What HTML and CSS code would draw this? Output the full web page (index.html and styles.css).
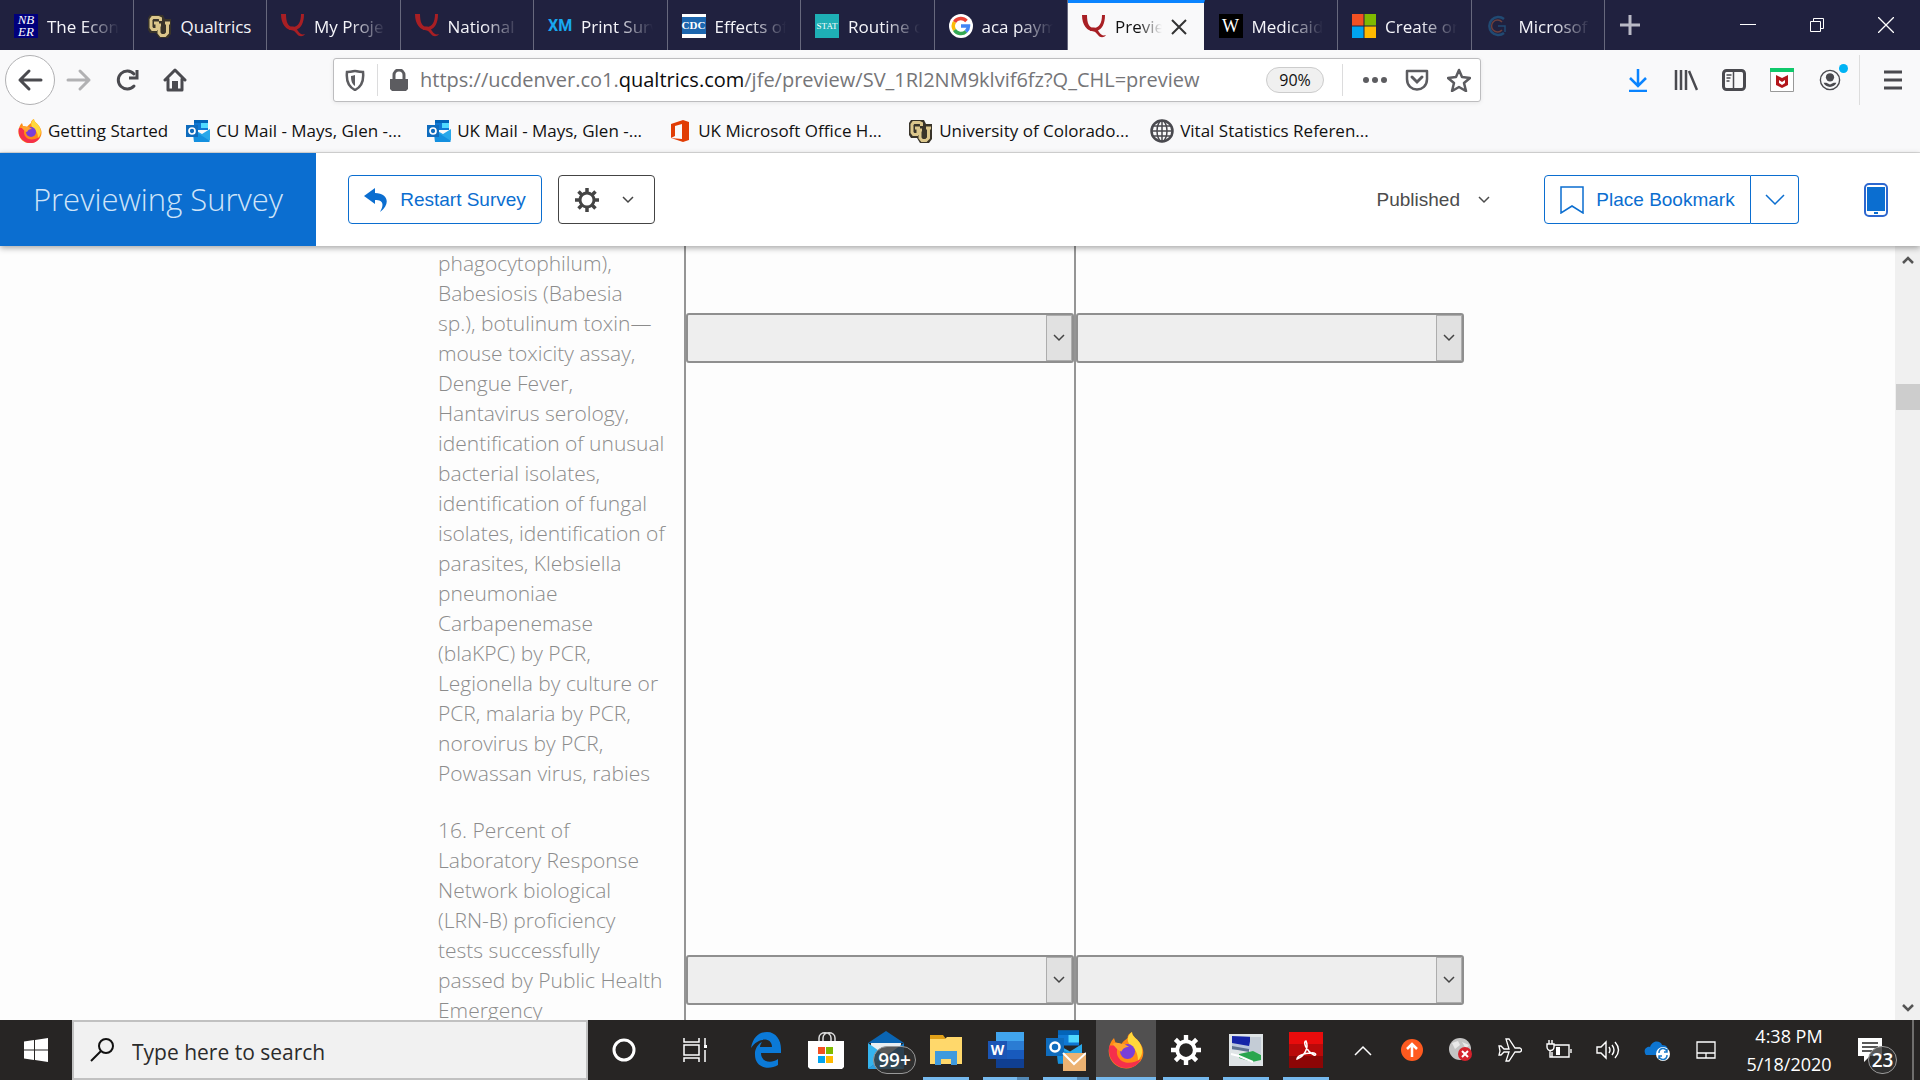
FILE: index.html
```html
<!DOCTYPE html>
<html lang="en">
<head>
    <meta charset="UTF-8">
    <meta name="viewport" content="width=device-width, initial-scale=1.0">
    <title>Preview Survey</title>
    <link rel="stylesheet" href="styles.css">
</head>
<body>
    <!-- Shared icons -->
    <svg class="sprite" aria-hidden="true">
        <symbol id="q-logo" viewBox="0 0 24 24">
            <path d="M0 0h5c0 8 2 13 7 13 5 0 8-5 8-13h3c0 9-3 14-8 16-8 2-15-4-15-16z" fill="#a81f24"/>
            <path d="M8 14c4-3 7-1 9 3 2 3 4 4 7 3-2 3-6 3-8 0-3-4-5-5-8-4z" fill="#a81f24"/>
        </symbol>
        <symbol id="cu-logo" viewBox="0 0 24 24">
            <path d="M2 1h13l2 4h6v15l-3 4h-9l-3-5H2l-2-3V4z" fill="#39342a"/>
            <path d="M12.500 7V4.500l-2-1h-6l-1.500 2v8l1.500 2H9M6 9h5M11 11v8l2 2.500h4l2.500-2.500V9M9 16v-5h4M17 9h5" fill="none" stroke="#dcc78c" stroke-width="3"/>
        </symbol>
        <symbol id="outlook" viewBox="0 0 24 24">
            <path d="M8 1h14v10H8z" fill="#0f78d4"/>
            <path d="M8 1h14v3H8z" fill="#0364b8"/>
            <path d="M15 4h7v5h-7z" fill="#50d9ff"/>
            <path d="M7 10l9 5 8-5v11l-2 2H8z" fill="#28a8ea"/>
            <path d="M7 11l17 11-1 1H8z" fill="#1490df"/>
            <path d="M0 6h12v12H0z" fill="#0f6cbd"/>
            <circle cx="6" cy="12" r="3" fill="none" stroke="#fff" stroke-width="1.700"/>
        </symbol>
        <symbol id="chevron" viewBox="0 0 12 8">
            <path d="M1 1l5 5 5-5" fill="none" stroke="currentColor" stroke-width="1.500"/>
        </symbol>
        <symbol id="gear" viewBox="0 0 24 24">
            <circle cx="12" cy="12" r="7" fill="none" stroke="currentColor" stroke-width="3"/>
            <path d="M12 0v5M12 19v5M0 12h5M19 12h5M3.500 3.500L7 7M17 17l3.500 3.500M3.500 20.500L7 17M17 7l3.500-3.500" stroke="currentColor" stroke-width="3.500"/>
        </symbol>
        <symbol id="firefox" viewBox="0 0 24 24">
            <path d="M16 0c0 3 3 4 5 7 4 5 3 11-1 14-5 5-13 4-17-1C-1 15 0 8 4 4l1 3 4 1c1-2 3-3 4-4 0-2 1-3 3-4z" fill="#ff8a16"/>
            <path d="M16 0c0 3 3 4 5 7 3 5 2 9-1 12 0-5-2-8-5-10-3-3-2-7 1-9z" fill="#ffd83b"/>
            <path d="M1 9c-2 8 4 15 11 15 5 0 8-2 10-6-5 3-12 4-15-1C5 14 6 10 8 9z" fill="#f5304b"/>
            <circle cx="13" cy="13" r="5" fill="#7a3fd8"/>
            <path d="M3 8c3-2 5 0 8 0l3 2c-3 0-4 1-5 3-2 0-4-3-6-5z" fill="#ffa32e"/>
        </symbol>
    </svg>

    <header class="browser">
        <div class="tab-bar">
            <nav class="tabs" aria-label="Open tabs">
                <a class="tab" href="#">
                    <span class="favicon nber">NB<br>ER</span>
                    <span class="tab-title fade">The Econ</span>
                </a>
                <a class="tab" href="#">
                    <svg class="favicon"><use href="#cu-logo"/></svg>
                    <span class="tab-title">Qualtrics</span>
                </a>
                <a class="tab" href="#">
                    <svg class="favicon"><use href="#q-logo"/></svg>
                    <span class="tab-title fade">My Proje</span>
                </a>
                <a class="tab" href="#">
                    <svg class="favicon"><use href="#q-logo"/></svg>
                    <span class="tab-title fade">National</span>
                </a>
                <a class="tab" href="#">
                    <span class="favicon xm">XM</span>
                    <span class="tab-title fade">Print Surv</span>
                </a>
                <a class="tab" href="#">
                    <span class="favicon cdc">CDC</span>
                    <span class="tab-title fade">Effects of</span>
                </a>
                <a class="tab" href="#">
                    <span class="favicon stat">STAT</span>
                    <span class="tab-title fade">Routine c</span>
                </a>
                <a class="tab" href="#">
                    <svg class="favicon" viewBox="0 0 24 24"><circle cx="12" cy="12" r="12" fill="#fff"/><g fill="none" stroke-width="3.500"><path d="M5.500 8A7.500 7.500 0 0 1 17.500 7" stroke="#ea4335"/><path d="M5.500 16a7.500 7.500 0 0 1 0-8" stroke="#fbbc05"/><path d="M17 17.500A7.500 7.500 0 0 1 5.500 16" stroke="#34a853"/><path d="M12 12h7.500a7.500 7.500 0 0 1-2.500 5.500" stroke="#4285f4"/></g></svg>
                    <span class="tab-title fade">aca paym</span>
                </a>
                <a class="tab active" href="#" aria-current="page">
                    <svg class="favicon"><use href="#q-logo"/></svg>
                    <span class="tab-title fade">Previe</span>
                    <svg class="tab-close" viewBox="0 0 16 16"><path d="M1 1l14 14M15 1L1 15" stroke="#333" stroke-width="2"/></svg>
                </a>
                <a class="tab" href="#">
                    <span class="favicon wiki">W</span>
                    <span class="tab-title fade">Medicaid</span>
                </a>
                <a class="tab" href="#">
                    <svg class="favicon" viewBox="0 0 24 24"><path d="M0 0h11.500v11.500H0z" fill="#f25022"/><path d="M12.500 0H24v11.500H12.500z" fill="#7fba00"/><path d="M0 12.500h11.500V24H0z" fill="#00a4ef"/><path d="M12.500 12.500H24V24H12.500z" fill="#ffb900"/></svg>
                    <span class="tab-title fade">Create on</span>
                </a>
                <a class="tab" href="#">
                    <svg class="favicon" viewBox="0 0 24 24"><g fill="none"><path d="M18 5a9 9 0 1 0 0 14" stroke="#214a73" stroke-width="2.500"/><path d="M16 8a6 6 0 1 0 0 8" stroke="#6d3f3c" stroke-width="1.500"/><path d="M12 12h7v6" stroke="#214a73" stroke-width="1.500"/></g></svg>
                    <span class="tab-title fade">Microsof</span>
                </a>
            </nav>
            <button class="new-tab" aria-label="New tab"><svg width="22" height="22" viewBox="0 0 22 22"><path d="M11 1v20M1 11h20" stroke="#b9bac6" stroke-width="3"/></svg></button>
            <div class="window-controls">
                <button aria-label="Minimize"><svg width="16" height="16" viewBox="0 0 16 16"><path d="M0 7.500h16" stroke="#fff"/></svg></button>
                <button aria-label="Restore"><svg width="16" height="16" viewBox="0 0 16 16"><path d="M1.500 4.500h10v10h-10zM4.500 4V1.500h10v10H12" fill="none" stroke="#fff"/></svg></button>
                <button aria-label="Close"><svg width="16" height="16" viewBox="0 0 16 16"><path d="M0 0l16 16M16 0L0 16" stroke="#fff" stroke-width="1.300"/></svg></button>
            </div>
        </div>

        <div class="nav-bar">
            <div class="nav-buttons">
                <button class="back" aria-label="Back"><svg width="26" height="24" viewBox="0 0 26 24"><path d="M24 12H3M12 3l-9 9 9 9" fill="none" stroke="#4a4a4f" stroke-width="3" stroke-linecap="round" stroke-linejoin="round"/></svg></button>
                <button aria-label="Forward"><svg width="26" height="24" viewBox="0 0 26 24"><path d="M2 12h21M14 3l9 9-9 9" fill="none" stroke="#b1b1b3" stroke-width="3" stroke-linecap="round" stroke-linejoin="round"/></svg></button>
                <button aria-label="Reload"><svg width="24" height="24" viewBox="0 0 24 24"><path d="M19 18a9 9 0 1 1 0-12" fill="none" stroke="#4a4a4f" stroke-width="3" stroke-linecap="round"/><path d="M22 2v8h-8" fill="none" stroke="#4a4a4f" stroke-width="3"/></svg></button>
                <button aria-label="Home"><svg width="24" height="24" viewBox="0 0 24 24"><path d="M2 12L12 2l10 10M5 11v11h14V11" fill="none" stroke="#4a4a4f" stroke-width="3" stroke-linecap="round" stroke-linejoin="round"/><path d="M9 13h6v8H9z" fill="#4a4a4f"/></svg></button>
            </div>
            <div class="url-bar">
                <svg width="20" height="22" viewBox="0 0 20 22"><path d="M2 3c6 0 6-1 8-1s2 1 8 1c1 9-2 15-8 18C4 18 1 12 2 3z" fill="none" stroke="#5c5c60" stroke-width="2.500"/><path d="M10 6c-1 0-2 1-4 1 0 5 1 8 4 10z" fill="#5c5c60"/></svg>
                <span class="url-line"></span>
                <svg width="18" height="22" viewBox="0 0 18 22"><path d="M0 10h18v10l-2 2H2l-2-2z" fill="#5c5c60"/><path d="M4 11V6a5 5 0 0 1 10 0v5" fill="none" stroke="#5c5c60" stroke-width="3"/></svg>
                <div class="url" role="textbox" aria-label="Address">https://ucdenver.co1.<b>qualtrics.com</b>/jfe/preview/SV_1Rl2NM9klvif6fz?Q_CHL=preview</div>
                <button class="zoom-level">90%</button>
                <span class="url-line"></span>
                <div class="page-actions">
                    <button aria-label="Page actions"><svg width="24" height="24" viewBox="0 0 24 24"><g fill="#5c5c60"><circle cx="3" cy="12" r="3"/><circle cx="12" cy="12" r="3"/><circle cx="21" cy="12" r="3"/></g></svg></button>
                    <button aria-label="Save to Pocket"><svg width="24" height="24" viewBox="0 0 24 24"><path d="M2 3h20v8c0 14-20 14-20 0z" fill="none" stroke="#5c5c60" stroke-width="2.500" stroke-linejoin="round"/><path d="M7 9l5 5 5-5" fill="none" stroke="#5c5c60" stroke-width="3" stroke-linecap="round"/></svg></button>
                    <button aria-label="Bookmark this page"><svg width="24" height="24" viewBox="0 0 24 24"><path d="M12 2l3 7 8 1-6 5 2 8-7-4-7 4 2-8-6-5 8-1z" fill="none" stroke="#5c5c60" stroke-width="2.500" stroke-linejoin="round"/></svg></button>
                </div>
            </div>
            <div class="toolbar">
                <button aria-label="Downloads"><svg width="24" height="24" viewBox="0 0 24 24"><path d="M12 1v17M4 10l8 8 8-8M3 23h18" fill="none" stroke="#0a84ff" stroke-width="2.500"/></svg></button>
                <button aria-label="Library"><svg width="24" height="24" viewBox="0 0 24 24"><path d="M2 2v20M7 2v20M12 2v20M15 3l8 19" stroke="#4a4a4f" stroke-width="2.500"/></svg></button>
                <button aria-label="Sidebars"><svg width="24" height="24" viewBox="0 0 24 24"><rect x="1.500" y="2.500" width="21" height="19" rx="3" fill="none" stroke="#4a4a4f" stroke-width="3"/><path d="M11.500 3v18M4.500 7h5M4.500 10h4M4.500 13h3" stroke="#4a4a4f" stroke-width="1.500"/></svg></button>
                <button aria-label="McAfee"><svg width="24" height="24" viewBox="0 0 24 24"><path d="M.5.500h23v23H.5z" fill="#fff" stroke="#999"/><path d="M0 0h24v4H0z" fill="#10c96b"/><path d="M6 7l6 3 6-3v10l-6 3-6-3z" fill="#b3161b"/><path d="M9 12l3 2 3-2v3l-3 2-3-2z" fill="#fff"/></svg></button>
                <button class="account" aria-label="Account"><svg width="22" height="22" viewBox="0 0 24 24"><circle cx="12" cy="12" r="10.500" fill="none" stroke="#4a4a4f" stroke-width="1.500"/><circle cx="12" cy="9" r="4.500" fill="#4a4a4f"/><path d="M5 15h3l4 2 4-2h3c-2 6-12 6-14 0z" fill="#4a4a4f"/></svg></button>
                <button class="menu" aria-label="Open menu"><svg width="18" height="20" viewBox="0 0 18 20"><path d="M0 2h18M0 10h18M0 18h18" stroke="#4a4a4f" stroke-width="3"/></svg></button>
            </div>
        </div>

        <nav class="bookmarks" aria-label="Bookmarks">
            <a class="short" href="#"><svg class="favicon"><use href="#firefox"/></svg>Getting Started</a>
            <a href="#"><svg class="favicon"><use href="#outlook"/></svg>CU Mail - Mays, Glen -...</a>
            <a href="#"><svg class="favicon"><use href="#outlook"/></svg>UK Mail - Mays, Glen -...</a>
            <a href="#"><svg class="favicon" viewBox="0 0 24 24"><path d="M3 5l12-4 6 2v18l-6 2-12-4 11 1V5L7 7v10l-4 2z" fill="#e13d05"/></svg>UK Microsoft Office H...</a>
            <a href="#"><svg class="favicon"><use href="#cu-logo"/></svg>University of Colorado...</a>
            <a href="#"><svg class="favicon" viewBox="0 0 24 24"><g fill="none" stroke="#4a4a4f" stroke-width="1.500"><circle cx="12" cy="12" r="10.500" stroke-width="2.500"/><ellipse cx="12" cy="12" rx="5" ry="10.500"/><path d="M12 1v22M1 12h22M3 7h18M3 17h18"/></g></svg>Vital Statistics Referen...</a>
        </nav>
    </header>

    <section class="preview-bar">
        <h1>Previewing Survey</h1>
        <button class="btn restart"><svg width="24" height="24" viewBox="0 0 24 24"><path d="M0 8l11-8v5c13 0 16 11 5 19 5-9 2-12-5-12v4z" fill="#0b6ed0"/></svg>Restart Survey</button>
        <button class="btn tools" aria-label="Tools"><svg width="24" height="24"><use href="#gear"/></svg><svg width="12" height="8"><use href="#chevron"/></svg></button>
        <button class="published">Published<svg width="12" height="8"><use href="#chevron"/></svg></button>
        <div class="bookmark-group">
            <button class="btn"><svg width="24" height="28" viewBox="0 0 24 28"><path d="M1 1h22v26l-11-7-11 7z" fill="none" stroke="#0b6ed0" stroke-width="1.500"/></svg>Place Bookmark</button>
            <button class="btn more" aria-label="More bookmark options"><svg width="20" height="12" viewBox="0 0 20 12"><path d="M1 1l9 9 9-9" fill="none" stroke="#0b6ed0" stroke-width="1.500"/></svg></button>
        </div>
        <button class="device" aria-label="Mobile view"><svg width="24" height="34" viewBox="0 0 24 34"><rect x="1" y="1" width="22" height="32" rx="4" fill="#fff" stroke="#2d67cf" stroke-width="2"/><path d="M3 4h18v24H3z" fill="#0b6ed0"/><path d="M10 30h4" stroke="#0b6ed0" stroke-width="2"/></svg></button>
    </section>

    <main class="survey">
        <div class="survey-page">
            <table class="matrix">
                <tbody>
                    <tr class="row-15">
                        <th scope="row" id="item15">phagocytophilum),<br>Babesiosis (Babesia<br>sp.), botulinum toxin—<br>mouse toxicity assay,<br>Dengue Fever,<br>Hantavirus serology,<br>identification of unusual<br>bacterial isolates,<br>identification of fungal<br>isolates, identification of<br>parasites, Klebsiella<br>pneumoniae<br>Carbapenemase<br>(blaKPC) by PCR,<br>Legionella by culture or<br>PCR, malaria by PCR,<br>norovirus by PCR,<br>Powassan virus, rabies</th>
                        <td><div class="dropdown"><select aria-labelledby="item15"><option></option></select><span class="arrow"><svg width="12" height="8"><use href="#chevron"/></svg></span></div></td>
                        <td><div class="dropdown"><select aria-labelledby="item15"><option></option></select><span class="arrow"><svg width="12" height="8"><use href="#chevron"/></svg></span></div></td>
                    </tr>
                    <tr class="row-16">
                        <th scope="row" id="item16">16. Percent of<br>Laboratory Response<br>Network biological<br>(LRN-B) proficiency<br>tests successfully<br>passed by Public Health<br>Emergency</th>
                        <td><div class="dropdown"><select aria-labelledby="item16"><option></option></select><span class="arrow"><svg width="12" height="8"><use href="#chevron"/></svg></span></div></td>
                        <td><div class="dropdown"><select aria-labelledby="item16"><option></option></select><span class="arrow"><svg width="12" height="8"><use href="#chevron"/></svg></span></div></td>
                    </tr>
                </tbody>
            </table>
        </div>
        <div class="scrollbar">
            <svg width="12" height="8" viewBox="0 0 12 8"><path d="M1 7l5-5 5 5" fill="none" stroke="currentColor" stroke-width="2.500"/></svg>
            <span class="thumb"></span>
            <svg width="12" height="8" viewBox="0 0 12 8"><path d="M1 1l5 5 5-5" fill="none" stroke="currentColor" stroke-width="2.500"/></svg>
        </div>
    </main>

    <footer class="taskbar">
        <button class="start" aria-label="Start"><svg width="24" height="24" viewBox="0 0 24 24"><path d="M0 3.500l10-1.500v9.500H0zM11 2l13-2v11.500H11zM0 12.500h10V22L0 20.500zM11 12.500h13V24l-13-2z" fill="#fff"/></svg></button>
        <label class="search">
            <svg width="24" height="24" viewBox="0 0 24 24"><circle cx="16" cy="8" r="7" fill="none" stroke="#111" stroke-width="2"/><path d="M11 13L1 23" stroke="#111" stroke-width="2"/></svg>
            <input type="text" placeholder="Type here to search" aria-label="Search">
        </label>
        <div class="system-apps">
            <button aria-label="Cortana"><svg width="24" height="24" viewBox="0 0 24 24"><circle cx="12" cy="12" r="10" fill="none" stroke="#fff" stroke-width="3"/></svg></button>
            <button aria-label="Task View"><svg width="24" height="24" viewBox="0 0 24 24"><path d="M1 0v4h15V0M1 24v-4h15v4M1 7h15v10H1zM22 0v7M22 12v12" fill="none" stroke="#fff" stroke-width="1.500"/><path d="M21 7h3v3h-3z" fill="#fff"/></svg></button>
        </div>
        <div class="apps">
            <button aria-label="Edge"><svg width="30" height="36" viewBox="0 0 30 36"><path d="M0 16C2 5 8 0 16 0c9 0 14 8 14 17v4H10c0 9 10 11 17 6v6C17 39 4 35 4 23c-.5-6 3-11 7-13-1 2-2 3-2 5h12C21 5 7 5 0 16z" fill="#0b7ad8"/></svg></button>
            <button aria-label="Store"><svg width="36" height="38" viewBox="0 0 36 38"><path d="M11 12V7c0-7 12-7 12 0v5M15 12V7c0-7 12-7 12 0v5" fill="none" stroke="#ddd" stroke-width="1.500"/><path d="M0 10h36v26l-2 2H2l-2-2z" fill="#fff"/><path d="M10 16h7v7h-7z" fill="#f25022"/><path d="M18 16h7v7h-7z" fill="#7fba00"/><path d="M10 25h7v7h-7z" fill="#00a4ef"/><path d="M18 25h7v7h-7z" fill="#ffb900"/></svg></button>
            <button class="mail" aria-label="Mail"><svg width="36" height="38" viewBox="0 0 36 38"><path d="M0 12L18 0l18 12z" fill="#0a65b3"/><path d="M3 12h30v15H3z" fill="#e9eef2"/><path d="M0 12l18 13L0 38z" fill="#35b4ee"/><path d="M36 12L18 25l18 13z" fill="#1479c9"/><path d="M0 38l18-15 18 15z" fill="#2b9fe0"/></svg><span class="badge">99+</span></button>
            <button class="open" aria-label="File Explorer"><svg width="32" height="30" viewBox="0 0 32 30"><path d="M0 0h13l3 4H0z" fill="#e0a018"/><path d="M0 4h15l2-2h15v27H0z" fill="#ffd86b"/><path d="M5 30V16h22v14h-6v-6H11v6z" fill="#3f9ade"/></svg></button>
            <button class="open several" aria-label="Word"><svg width="36" height="36" viewBox="0 0 36 36"><path d="M8 0h28v9H8z" fill="#41a5ee"/><path d="M8 9h28v9H8z" fill="#2b7cd3"/><path d="M8 18h28v9H8z" fill="#185abd"/><path d="M8 27h28v9H8z" fill="#103f91"/><path d="M0 9h19v18H0z" fill="#1b55b5"/><text x="9.500" y="23" class="word-mark">W</text></svg></button>
            <button class="open several" aria-label="Outlook"><svg width="40" height="42" viewBox="0 0 40 42"><use href="#outlook" width="36" height="36"/><path d="M17 24h23v18H17z" fill="#ecb272"/><path d="M17 24l11 11 12-11" fill="none" stroke="#fff" stroke-width="2"/></svg></button>
            <button class="open current" aria-label="Firefox"><svg width="36" height="38"><use href="#firefox"/></svg></button>
            <button class="open" aria-label="Settings"><svg width="30" height="30"><use href="#gear"/></svg></button>
            <button class="open" aria-label="Remote Desktop"><svg width="34" height="32" viewBox="0 0 34 32"><path d="M0 0h34v32H0z" fill="#dfe4e6"/><path d="M3 2h18v14H3z" fill="#b9c5dc"/><path d="M3 2l19 1-2 9-17-3z" fill="#1524a8"/><path d="M21 3h11v17l-11-3z" fill="#c4ccd6"/><path d="M3 12l17 3v3L3 15z" fill="#5f7290"/><path d="M10 20l14-3 8 4v5l-9 2-13-4z" fill="#2aa64e"/><path d="M2 20l8 2 14 6" fill="none" stroke="#fff" stroke-width="2"/></svg></button>
            <button class="open" aria-label="Acrobat Reader"><svg width="34" height="36" viewBox="0 0 34 36"><path d="M0 0h34v13H0z" fill="#e80c0c"/><path d="M0 12h34v12H0z" fill="#b90a0a"/><path d="M0 24h34v12H0z" fill="#8c0606"/><path d="M8 27c8-3 12-12 9-18-3 0-1 9 8 14 3 1 2-3-3-2-7 0-14 3-14 6z" fill="none" stroke="#fff" stroke-width="1.500"/></svg></button>
        </div>
        <div class="tray">
            <button aria-label="Show hidden icons"><svg width="18" height="11" viewBox="0 0 18 11"><path d="M1 10l8-8 8 8" fill="none" stroke="#fff" stroke-width="1.500"/></svg></button>
            <button aria-label="Update"><svg width="22" height="22" viewBox="0 0 22 22"><circle cx="11" cy="11" r="11" fill="#ff5a1f"/><path d="M11 18V5M6 10l5-5 5 5" fill="none" stroke="#fff" stroke-width="2.500"/></svg></button>
            <button aria-label="Network error"><svg width="24" height="24" viewBox="0 0 24 24"><circle cx="11" cy="11" r="11" fill="#c4c4c4"/><path d="M3 5l6-2 2 4-5 4zM13 4l7 3-3 4z" fill="#e9e9e9"/><circle cx="16" cy="16" r="7" fill="#d5222c"/><path d="M13 13l6 6M19 13l-6 6" stroke="#fff" stroke-width="2"/></svg></button>
            <button aria-label="Airplane mode"><svg width="24" height="24" viewBox="0 0 24 24"><path d="M1 8h2l3 3h5L8 1h3l6 9h5c2 1 2 3 0 4h-5l-6 9H8l3-9H6l-3 3H1l1-4z" fill="none" stroke="#fff" stroke-width="1.300"/></svg></button>
            <button aria-label="Battery"><svg width="26" height="20" viewBox="0 0 26 20"><path d="M8 5h15v12H6v-5M25 9v4M1 4h7v3a3 3 0 0 1-7 0zM3 4V0M6 4V0M4 10v7h2" fill="none" stroke="#fff" stroke-width="1.400"/><path d="M10 7h4v8h-4z" fill="#fff"/></svg></button>
            <button aria-label="Volume"><svg width="24" height="20" viewBox="0 0 24 20"><path d="M1 7h4l5-5v16l-5-5H1zM13 7q2 3 0 6M16 5q4 5 0 10M19 2q7 8 0 16" fill="none" stroke="#fff" stroke-width="1.400"/></svg></button>
            <button aria-label="OneDrive"><svg width="26" height="22" viewBox="0 0 26 22"><path d="M2 16c-4-6 2-9 4-8 3-8 11-6 12-2 5 0 6 3 6 6v4z" fill="#0d75d1"/><circle cx="19" cy="15" r="7" fill="#fff"/><path d="M15 14a4 4 0 0 1 8-1M23 16a4 4 0 0 1-8 1M23 10v3h-3M15 20v-3h3" fill="none" stroke="#1878c8" stroke-width="1.500"/></svg></button>
            <button aria-label="Touchpad"><svg width="20" height="18" viewBox="0 0 20 18"><path d="M1 1h18v16H1zM1 12h18M10 12v5" fill="none" stroke="#fff" stroke-width="1.300"/></svg></button>
        </div>
        <div class="clock"><span>4:38 PM</span><span>5/18/2020</span></div>
        <button class="notifications" aria-label="Notifications"><svg width="24" height="24" viewBox="0 0 24 24"><path d="M0 0h24v18H12l-6 6v-6H0z" fill="#fff"/><path d="M4 5h16M4 9h16M4 13h10" stroke="#222" stroke-width="1.500"/></svg><span class="badge">23</span></button>
    </footer>
</body>
</html>
```
FILE: styles.css
```css
* {
    box-sizing: border-box;
}

body {
    margin: 0;
    height: 100vh;
    display: flex;
    flex-direction: column;
    overflow: hidden;
    background-color: #fdfdfd;
    font-family: "Open Sans", "Noto Sans", sans-serif;
    font-size: 17px;
    color: #111;
}

button {
    padding: 0;
    border: none;
    background: none;
    font: inherit;
    color: inherit;
    cursor: pointer;
    display: flex;
    align-items: center;
    justify-content: center;
}

a {
    color: inherit;
    text-decoration: none;
}

svg {
    flex: none;
    display: block;
}

.sprite {
    position: absolute;
    width: 0;
    height: 0;
}

.favicon {
    width: 24px;
    height: 24px;
    flex: none;
}

/* Tab bar */
.tab-bar {
    display: flex;
    height: 50px;
    background-color: #20213f;
    color: #f5f5fa;
}

.tabs {
    display: flex;
    width: 1605px;
}

.tab {
    flex: 1 1 0;
    min-width: 0;
    display: flex;
    align-items: center;
    gap: 9px;
    padding: 2px 14px 0;
    border-right: 1px solid #67687d;
}

.tab.active {
    background-color: #f9f9fa;
    color: #111;
    border-top: 3px solid #0a84ff;
    border-right-color: #20213f;
    padding: 0 17px 0 14px;
}

.tab-title {
    flex: 1;
    overflow: hidden;
    white-space: nowrap;
}

.fade {
    mask-image: linear-gradient(to right, #000 50%, transparent);
}

.tab-close {
    width: 16px;
    height: 16px;
}

.nber {
    background-color: #00007c;
    color: #fff;
    font: italic 13px/12px "Liberation Serif", serif;
    text-align: center;
}

.xm {
    color: #18a8f0;
    font: bold 16px/24px Roboto, sans-serif;
}

.cdc {
    background-color: #1c66ae;
    border-bottom: 4px solid #fff;
    border-top: 3px solid #fff;
    color: #fff;
    font: bold 11px/17px "Liberation Serif", serif;
    text-align: center;
}

.stat {
    background-color: #1eafb5;
    color: #fff;
    font: 9px/24px "Liberation Serif", serif;
    text-align: center;
}

.wiki {
    background-color: #000;
    color: #fff;
    font: 18px/24px "Liberation Serif", serif;
    text-align: center;
}

.new-tab {
    width: 50px;
}

.window-controls {
    display: flex;
    margin-left: auto;
}

.window-controls button {
    width: 69px;
}

/* Navigation bar */
.nav-bar {
    display: flex;
    align-items: center;
    height: 59px;
    padding-left: 5px;
    background-color: #f9f9fa;
}

.nav-buttons {
    display: flex;
    width: 328px;
}

.nav-buttons button {
    width: 48px;
    height: 50px;
}

.nav-buttons .back {
    width: 50px;
    border: 1px solid #b1b1b3;
    border-radius: 50%;
    background-color: #fff;
}

.url-bar {
    flex: 1;
    display: flex;
    align-items: center;
    gap: 12px;
    height: 44px;
    padding: 0 9px 0 11px;
    border: 1px solid #bdbdbf;
    border-radius: 3px;
    background-color: #fff;
    box-shadow: 0 1px 4px rgba(0, 0, 0, 0.08);
}

.url-line {
    width: 1px;
    height: 32px;
    background-color: #dcdcdd;
}

.url {
    flex: 1;
    font-size: 20px;
    color: #757578;
    white-space: nowrap;
}

.url b {
    font-weight: normal;
    color: #0c0c0d;
}

.zoom-level {
    width: 58px;
    height: 26px;
    margin-right: 6px;
    border: 1px solid #ccc;
    border-radius: 13px;
    background-color: #f0f0f0;
    font-size: 16px;
}

.page-actions {
    display: flex;
    gap: 18px;
    margin-left: 8px;
}

.toolbar {
    display: flex;
    width: 439px;
    justify-content: flex-end;
}

.toolbar button {
    width: 48px;
    height: 50px;
}

.toolbar .menu {
    width: 61px;
    margin-left: 5px;
    padding-left: 6px;
    border-left: 1px solid #ddd;
}

.account {
    position: relative;
}

.account::after {
    content: "";
    position: absolute;
    top: 9px;
    right: 6px;
    width: 9px;
    height: 9px;
    border-radius: 50%;
    background-color: #00b3f4;
}

/* Bookmarks */
.bookmarks {
    display: flex;
    align-items: center;
    gap: 18px;
    height: 44px;
    padding: 0 18px;
    background-color: #f9f9fa;
    border-bottom: 1px solid #ddd;
}

.bookmarks a {
    display: flex;
    align-items: center;
    gap: 6px;
    width: 223px;
    white-space: nowrap;
}

.bookmarks .short {
    width: auto;
}

/* Survey preview header */
.preview-bar {
    z-index: 1;
    display: flex;
    align-items: center;
    height: 93px;
    padding-right: 32px;
    background-color: #fff;
    box-shadow: 0 2px 6px rgba(0, 0, 0, 0.35);
    font-family: "Liberation Sans", Arial, sans-serif;
    font-size: 19px;
}

.preview-bar h1 {
    align-self: stretch;
    width: 316px;
    margin: 0 32px 0 0;
    background-color: #0b6ed0;
    color: #cfe4f8;
    font-family: "Open Sans", sans-serif;
    font-size: 31px;
    font-weight: 300;
    line-height: 93px;
    text-align: center;
}

.btn {
    height: 49px;
    gap: 12px;
    border: 1px solid #0b6ed0;
    border-radius: 4px;
    color: #0b6ed0;
}

.restart {
    width: 194px;
}

.tools {
    width: 97px;
    margin-left: 16px;
    padding-right: 4px;
    gap: 23px;
    border-color: #444;
    color: #444;
}

.published {
    gap: 18px;
    margin-left: auto;
    color: #4c4c4c;
}

.bookmark-group {
    display: flex;
    margin: 0 65px 0 54px;
}

.bookmark-group .btn {
    width: 207px;
    border-radius: 4px 0 0 4px;
}

.bookmark-group .more {
    width: 48px;
    border-left: none;
    border-radius: 0 4px 4px 0;
}

/* Survey body */
.survey {
    flex: 1;
    min-height: 0;
    display: flex;
}

.survey-page {
    flex: 1;
    overflow: hidden;
}

.matrix {
    width: 1026px;
    margin: 0 auto 0 438px;
    border-collapse: collapse;
    table-layout: fixed;
}

.matrix th {
    width: 247px;
    padding: 2px 0 14px;
    color: #8c8c8c;
    font-family: "Open Sans", sans-serif;
    font-size: 21px;
    font-weight: 300;
    line-height: 30px;
    text-align: left;
    vertical-align: top;
    white-space: nowrap;
}

.matrix td {
    padding: 0;
    border-left: 2px solid #959595;
}

.row-15 td {
    padding-top: 67px;
    vertical-align: top;
}

.row-16 {
    height: 356px;
}

.row-16 th {
    padding-top: 13px;
}

.dropdown {
    position: relative;
}

.dropdown select {
    display: block;
    width: 100%;
    height: 50px;
    appearance: none;
    border: 2px solid #8f8f8f;
    border-radius: 3px;
    background-color: #eee;
}

.arrow {
    position: absolute;
    top: 2px;
    right: 2px;
    bottom: 2px;
    width: 26px;
    display: flex;
    align-items: center;
    justify-content: center;
    border: 1px solid #adadad;
    background-color: #e1e1e1;
    color: #444;
    pointer-events: none;
}

.scrollbar {
    display: flex;
    flex-direction: column;
    align-items: center;
    width: 25px;
    padding: 10px 0 8px;
    background-color: #f0f0f0;
    color: #555;
}

.thumb {
    width: 24px;
    height: 26px;
    margin: 120px 0 auto;
    background-color: #cdcdcd;
}

/* Taskbar */
.taskbar {
    display: flex;
    height: 60px;
    background-color: #272524;
    color: #fff;
}

.start {
    width: 72px;
}

.search {
    display: flex;
    align-items: center;
    gap: 18px;
    width: 516px;
    padding: 0 16px;
    border: 2px solid #c1c1c1;
    background-color: #f1f1f1;
}

.search input {
    flex: 1;
    padding: 4px 0 0;
    border: none;
    background: none;
    font: 21px "Open Sans", sans-serif;
}

.search input::placeholder {
    color: #2b2b2b;
}

.system-apps {
    display: flex;
}

.system-apps button {
    width: 71px;
}

.apps {
    display: flex;
    margin-left: 6px;
}

.apps button {
    position: relative;
    width: 60px;
}

.open::after {
    content: "";
    position: absolute;
    left: 7px;
    right: 7px;
    bottom: 0;
    height: 3px;
    background-color: #76b9ed;
}

/* Apps with more than one window get a darker end on the bar */
.several::after {
    border-right: 12px solid #5388b4;
}

.current {
    background-color: #515050;
}

.current::after {
    left: 0;
    right: 0;
}

.word-mark {
    fill: #fff;
    font: bold 14px "Open Sans", sans-serif;
    text-anchor: middle;
}

.badge {
    position: absolute;
    border: 1px solid #999;
    border-radius: 14px;
    background-color: rgba(50, 50, 50, 0.8);
    font-size: 19px;
    font-weight: 600;
    line-height: 26px;
}

.mail .badge {
    right: 0;
    bottom: 6px;
    width: 43px;
}

.tray {
    display: flex;
    margin-left: auto;
}

.tray button {
    width: 49px;
}

.clock {
    display: flex;
    flex-direction: column;
    justify-content: center;
    width: 118px;
    line-height: 28px;
    text-align: center;
    font-size: 18px;
}

.notifications {
    position: relative;
    width: 66px;
    margin-right: 6px;
    padding-right: 20px;
    border-right: 2px solid #6f6e6d;
}

.notifications .badge {
    right: 15px;
    bottom: 6px;
    width: 29px;
}
```
